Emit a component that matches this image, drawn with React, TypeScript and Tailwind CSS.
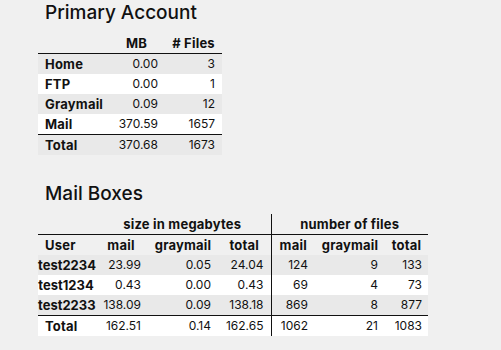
import React from "react";

const font = { fontFamily: "Inter, 'Liberation Sans', sans-serif" };

const primary = [
  ["Home", "0.00", "3"],
  ["FTP", "0.00", "1"],
  ["Graymail", "0.09", "12"],
  ["Mail", "370.59", "1657"],
];

const boxes = [
  ["test2234", "23.99", "0.05", "24.04", "124", "9", "133"],
  ["test1234", "0.43", "0.00", "0.43", "69", "4", "73"],
  ["test2233", "138.09", "0.09", "138.18", "869", "8", "877"],
];

const b = "font-bold text-[13px] tracking-[0.2px]";

export default function App() {
  return (
    <div className="min-h-[350px] w-[501px] bg-[#f0f0f0] text-[#111] pl-[38px]" style={font}>
      <h1 className="pl-[7px] pt-[1px] text-[19px] font-medium leading-[24px]">Primary Account</h1>
      <table className="mt-[8px] border-collapse text-[12px] leading-[20px]">
        <colgroup>
          <col className="w-[70px]" />
          <col className="w-[57px]" />
          <col className="w-[57px]" />
        </colgroup>
        <thead>
          <tr className="h-[20px] border-b-[1.5px] border-[#111]">
            <th></th>
            <th className={`text-center ${b}`}>MB</th>
            <th className={`text-center ${b}`}># Files</th>
          </tr>
        </thead>
        <tbody>
          {primary.map((r, i) => (
            <tr key={r[0]} className={`h-[20px] ${i % 2 === 0 ? "bg-[#e9e9e9]" : "bg-white"}`}>
              <th className={`pl-[7px] text-left ${b}`}>{r[0]}</th>
              <td className="pr-[7px] text-right">{r[1]}</td>
              <td className="pr-[7px] text-right">{r[2]}</td>
            </tr>
          ))}
          <tr className="h-[20px] border-t-[1.5px] border-[#111] bg-[#e9e9e9]">
            <th className={`pl-[7px] text-left ${b}`}>Total</th>
            <td className="pr-[7px] text-right">370.68</td>
            <td className="pr-[7px] text-right">1673</td>
          </tr>
        </tbody>
      </table>

      <h2 className="mt-[27px] pl-[7px] text-[19px] font-medium leading-[24px]">Mail Boxes</h2>
      <table className="mt-[8px] border-collapse text-[12px] leading-[20px] table-fixed w-[390px]">
        <colgroup>
          <col className="w-[56px]" />
          <col className="w-[54px]" />
          <col className="w-[70px]" />
          <col className="w-[53px]" />
          <col className="w-[44px]" />
          <col className="w-[70px]" />
          <col className="w-[43px]" />
        </colgroup>
        <thead>
          <tr className="h-[20px] border-b-[1.5px] border-[#111]">
            <th></th>
            <th colSpan={3} className={`text-center border-r border-[#111] ${b}`}>size in megabytes</th>
            <th colSpan={3} className={`text-center ${b}`}>number of files</th>
          </tr>
          <tr className="h-[20px]">
            <th className={`pl-[7px] text-left ${b}`}>User</th>
            <th className={`text-center ${b}`}>mail</th>
            <th className={`text-center ${b}`}>graymail</th>
            <th className={`text-center border-r border-[#111] ${b}`}>total</th>
            <th className={`text-center ${b}`}>mail</th>
            <th className={`text-center ${b}`}>graymail</th>
            <th className={`text-center ${b}`}>total</th>
          </tr>
        </thead>
        <tbody>
          {boxes.map((r, i) => (
            <tr key={r[0]} className={`h-[20px] ${i % 2 === 0 ? "bg-[#e9e9e9]" : "bg-white"}`}>
              <th className="px-0 text-center whitespace-nowrap font-bold text-[13px]">{r[0]}</th>
              <td className="pr-[7px] text-right">{r[1]}</td>
              <td className="pr-[7px] text-right">{r[2]}</td>
              <td className="pr-[7px] text-right border-r border-[#111]">{r[3]}</td>
              <td className="pr-[7px] text-right">{r[4]}</td>
              <td className="pr-[7px] text-right">{r[5]}</td>
              <td className="pr-[6px] text-right">{r[6]}</td>
            </tr>
          ))}
          <tr className="h-[20px] border-t-[1.5px] border-[#111] bg-white">
            <th className={`pl-[7px] text-left ${b}`}>Total</th>
            <td className="pr-[7px] text-right">162.51</td>
            <td className="pr-[7px] text-right">0.14</td>
            <td className="pr-[7px] text-right border-r border-[#111]">162.65</td>
            <td className="pr-[7px] text-right">1062</td>
            <td className="pr-[7px] text-right">21</td>
            <td className="pr-[6px] text-right">1083</td>
          </tr>
        </tbody>
      </table>
    </div>
  );
}
